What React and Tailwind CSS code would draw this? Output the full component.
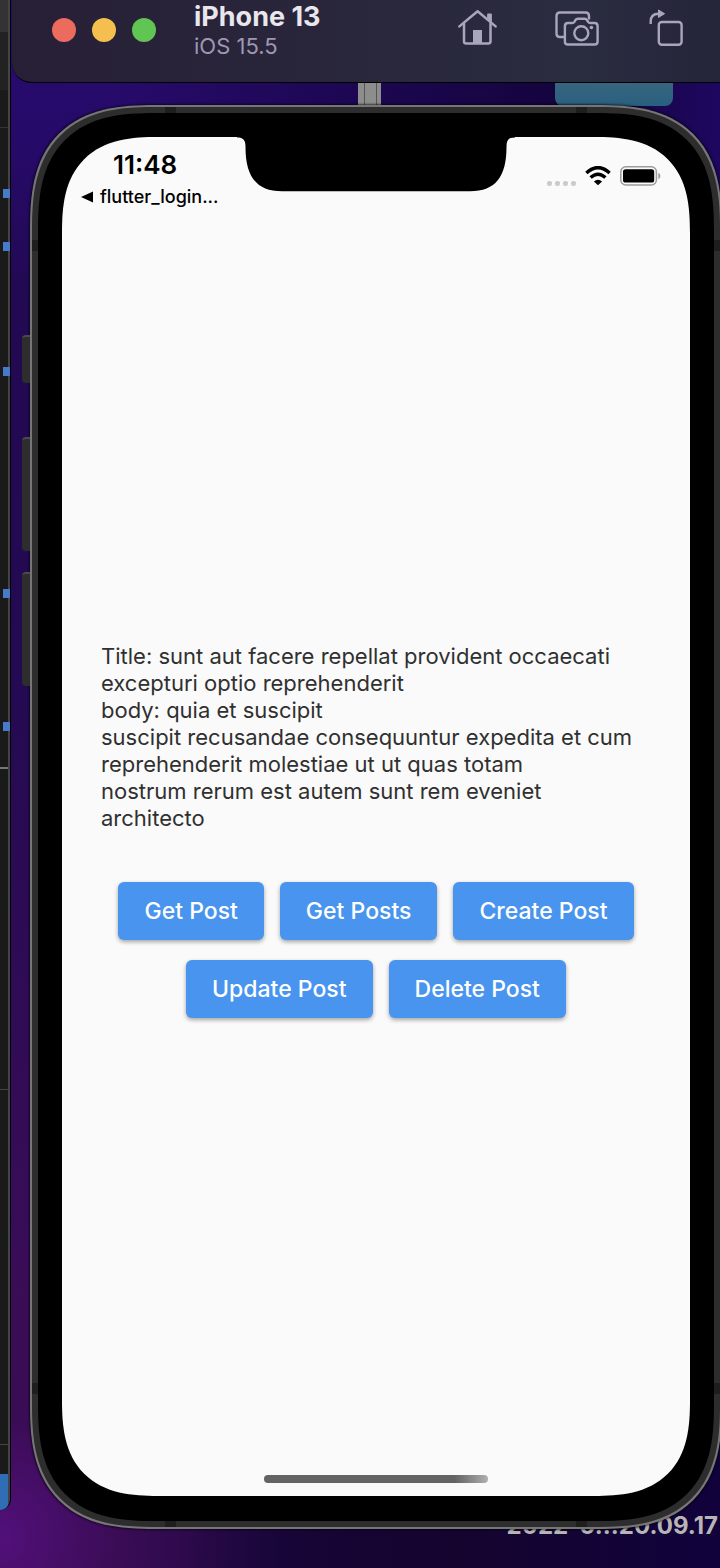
import React from "react";

const MARKERS = ["top-[189px]", "top-[242px]", "top-[367px]", "top-[589px]", "top-[722px]"];

const POST = `Title: sunt aut facere repellat provident occaecati excepturi optio reprehenderit
body: quia et suscipit
suscipit recusandae consequuntur expedita et cum
reprehenderit molestiae ut ut quas totam
nostrum rerum est autem sunt rem eveniet architecto`;

const ACTIONS = ["Get Post", "Get Posts", "Create Post", "Update Post", "Delete Post"];

function HomeIcon() {
  return (
    <svg width="40" height="38" viewBox="0 0 40 38" fill="none" stroke="currentColor" strokeWidth="2.5" strokeLinecap="round" strokeLinejoin="round">
      <path d="M1.4 17.4 L19.6 2.2 L37.6 17.4" />
      <path d="M6 14.5 V32.200 Q6 34.500 8.300 34.500 H30.200 Q32.500 34.500 32.500 32.200 V14.500" />
      <path d="M30 10.500 V5.500 H33 V13" fill="currentColor" strokeWidth="1.800" />
      <rect x="15" y="21" width="9" height="14" fill="currentColor" stroke="none" />
    </svg>
  );
}

function ScreenshotIcon() {
  return (
    <svg width="44" height="36" viewBox="0 0 44 36" fill="none" stroke="currentColor" strokeWidth="2.4" strokeLinecap="butt" strokeLinejoin="round">
      <path d="M9.5 26 H5 Q1.500 26 1.500 22.500 V5 Q1.500 1.500 5 1.500 H30.500 Q34 1.500 34 5 V8.500" />
      <path d="M13 12 H17.200 Q18.600 12 19.400 10.800 L20.500 9 Q21.300 7.800 22.800 7.800 H29.700 Q31.200 7.800 32 9 L33.100 10.800 Q33.900 12 35.300 12 H39.500 Q42.600 12 42.600 15.100 V30.400 Q42.600 33.500 39.500 33.500 H13 Q9.900 33.500 9.900 30.400 V15.100 Q9.900 12 13 12 Z" />
      <circle cx="26.300" cy="22.200" r="7" />
      <circle cx="36.400" cy="16.500" r="1.800" fill="currentColor" stroke="none" />
    </svg>
  );
}

function RotateIcon() {
  return (
    <svg width="34" height="38" viewBox="0 0 34 38" fill="none" stroke="currentColor" strokeWidth="2.400" strokeLinecap="butt" strokeLinejoin="round">
      <path d="M1.700 16 V13.500 Q1.700 5.700 9.500 5.700" />
      <path d="M9.500 2 L15.600 5.700 L9.500 9.400 Z" fill="currentColor" strokeWidth="1" />
      <rect x="9.800" y="14" width="22.800" height="22.800" rx="3" />
    </svg>
  );
}

function WifiIcon() {
  return (
    <svg width="26" height="20" viewBox="0 0 26 20" fill="none" stroke="black" strokeWidth="3.400" aria-label="Wi-Fi">
      <path d="M1.400 7 Q13 -3.800 24.600 7" />
      <path d="M5.600 11.600 Q13 4.800 20.400 11.600" />
      <path d="M13 19.300 L8.900 15.400 Q13 11.900 17.100 15.400 Z" fill="black" stroke="none" />
    </svg>
  );
}

function BatteryIcon() {
  return (
    <svg width="41" height="20" viewBox="0 0 41 20" aria-label="Battery full">
      <rect x="0.800" y="0.800" width="35.600" height="18.200" rx="5" fill="none" stroke="#9c9c9c" strokeWidth="1.500" />
      <rect x="3" y="3.200" width="31.200" height="13.400" rx="2.600" fill="black" />
      <path d="M38.300 6.800 Q40.400 7.800 40.400 10 Q40.400 12.200 38.300 13.200 Z" fill="#9c9c9c" />
    </svg>
  );
}

function Notch() {
  return (
    <svg className="absolute left-1/2 top-0 -translate-x-1/2" width="278" height="55" viewBox="0 0 278 55" aria-hidden="true">
      <path d="M0 -1 H278 V0.500 C271.500 0.500 269.500 3 269.500 10 C269.500 39 259 54.300 233 54.300 H45 C19 54.300 8.500 39 8.500 10 C8.500 3 6.500 0.500 0 0.500 Z" fill="black" />
    </svg>
  );
}

function EditorWindow() {
  return (
    <aside className="absolute left-0 top-0 h-[1510px] w-[11px] overflow-hidden rounded-br-xl border-r border-black bg-[#1a1a1a]">
      <div className="flex h-full flex-col border-r-2 border-[#444444]">
        <div className="h-8 bg-[#333333]" />
        <div className="h-[58px] bg-[#222222]" />
        <div className="h-[38px] border-b border-[#333333]" />
        <div className="h-[641px] border-b-2 border-[#777777]" />
        <div className="h-[321px] border-b border-[#444444]" />
        <div className="h-[355px] border-b border-[#444444]" />
        <div className="h-[29px]" />
        <div className="flex-1 bg-[#2f6db5]" />
      </div>
      {MARKERS.map((top) => (
        <span key={top} className={`absolute right-0 h-[9px] w-[7px] bg-[#467bcb] ${top}`} />
      ))}
    </aside>
  );
}

function TitleBar() {
  return (
    <header className="relative z-10 ml-3 flex h-[83px] items-start justify-between rounded-bl-[20px] border-b border-black bg-linear-to-r from-[#271f35] via-[#2a2c40] via-80% to-[#25253a] pl-10 pr-[37px]">
      <div className="flex">
        <div className="flex gap-4 pt-[18px]">
          <button aria-label="Close" className="size-6 rounded-full bg-[#ed6a5f]" />
          <button aria-label="Minimize" className="size-6 rounded-full bg-[#f5bf4f]" />
          <button aria-label="Zoom" className="size-6 rounded-full bg-[#61c554]" />
        </div>
        <div className="ml-[38px] pt-0.5">
          <h1 className="text-[27px] font-bold leading-[30px] text-[#e9e6ee]">iPhone 13</h1>
          <p className="text-[22px] leading-7 text-[#9f97b3]">iOS 15.5</p>
        </div>
      </div>
      <div className="flex text-[#a9a5bd]">
        <button aria-label="Home" className="mt-[9px]"><HomeIcon /></button>
        <button aria-label="Screenshot" className="ml-[57px] mt-[11px]"><ScreenshotIcon /></button>
        <button aria-label="Rotate" className="ml-[50px] mt-1.5"><RotateIcon /></button>
      </div>
    </header>
  );
}

function StatusBar() {
  return (
    <div className="flex h-[76px] shrink-0 items-start justify-between pl-[18px] pr-[29px] text-black">
      <div>
        <p className="pl-[33px] pt-[13px] text-[26px] font-semibold leading-[30px]">11:48</p>
        <a href="#back" className="mt-[5px] flex items-center gap-1.5 text-[18px] font-medium leading-6">
          <svg width="14" height="12" viewBox="0 0 14 12" aria-hidden="true"><path d="M1 6 L13 0.500 V11.500 Z" fill="black" /></svg>
          flutter_login...
        </a>
      </div>
      <div className="flex items-end gap-[9px] pt-[29px]">
        <div className="flex gap-[3px]">
          {[0, 1, 2, 3].map((n) => <span key={n} className="size-[5px] rounded-[2px] bg-[#cbcbcb]" />)}
        </div>
        <WifiIcon />
        <BatteryIcon />
      </div>
    </div>
  );
}

function Phone() {
  return (
    <div className="relative -mr-0.5 ml-[30px] mt-[22px] flex flex-1 flex-col">
      <span className="absolute -left-2 top-[230px] h-12 w-2 rounded-l-sm border-t-2 border-[#4a4a4a] bg-[#2d2d2d]" />
      <span className="absolute -left-2 top-[332px] h-[114px] w-2 rounded-l-sm border-t-2 border-[#4a4a4a] bg-[#2d2d2d]" />
      <span className="absolute -left-2 top-[467px] h-[114px] w-2 rounded-l-sm border-t-2 border-[#4a4a4a] bg-[#2d2d2d]" />
      <div className="flex flex-1 flex-col rounded-[125px] border-2 border-[#767676] bg-[#2d2d2d] p-1.5 shadow-[0_0_2px_1px_rgba(0,0,0,0.6)] [corner-shape:superellipse(1.4)]">
        <div className="flex flex-1 flex-col rounded-[117px] bg-black p-6 pb-[25px] [corner-shape:superellipse(1.4)]">
          <main className="relative flex flex-1 flex-col overflow-hidden rounded-[96px] bg-[#fafafa] [corner-shape:superellipse(1.4)]">
            <Notch />
            <StatusBar />
            <div className="flex flex-1 flex-col justify-center gap-[50px] px-[39px]">
              <p className="whitespace-pre-line text-[22px] leading-[27px] text-[#303030]">{POST}</p>
              <div className="flex flex-wrap justify-center gap-x-4 gap-y-5">
                {ACTIONS.map((label) => (
                  <button key={label} className="h-[58px] rounded-md bg-[#4894ee] px-[26px] text-[23px] font-medium text-white shadow-[0_2px_4px_rgba(0,0,0,0.35)]">
                    {label}
                  </button>
                ))}
              </div>
            </div>
            <div className="flex h-12 shrink-0 items-end justify-center pb-[13px]">
              <span className="h-2 w-56 rounded-full bg-linear-to-r from-[#636363] from-85% to-[#b0b0b0]" />
            </div>
          </main>
        </div>
      </div>
      <span className="absolute left-[135px] top-0.5 h-1.5 w-[11px] bg-[#1e1e1e]" />
      <span className="absolute right-[135px] top-0.5 h-1.5 w-[11px] bg-[#1e1e1e]" />
      <span className="absolute bottom-0.5 left-[135px] h-1.5 w-[11px] bg-[#1e1e1e]" />
      <span className="absolute bottom-0.5 right-[135px] h-1.5 w-[11px] bg-[#1e1e1e]" />
      <span className="absolute left-0.5 top-[135px] h-[11px] w-1.5 bg-[#1e1e1e]" />
      <span className="absolute right-0.5 top-[135px] h-[11px] w-1.5 bg-[#1e1e1e]" />
      <span className="absolute bottom-[135px] left-0.5 h-[11px] w-1.5 bg-[#1e1e1e]" />
      <span className="absolute bottom-[135px] right-0.5 h-[11px] w-1.5 bg-[#1e1e1e]" />
    </div>
  );
}

export default function App() {
  return (
    <div className="relative flex min-h-screen flex-col overflow-hidden bg-[radial-gradient(circle_at_0%_98%,#52107a_0,#3a0c55_120px,transparent_300px),linear-gradient(to_bottom,#280b70_0,#260a68_150px,#220952_300px,#240a52_700px,#3c0d58_1350px,#3c0d58_1400px,#17063c_1520px)] pb-[39px] font-['Inter',sans-serif]">
      <div className="absolute right-0 top-20 h-40 w-[85%] bg-linear-to-r from-transparent via-[#14043d] via-75% to-[#1e0760]" />
      <div className="absolute bottom-0 right-0 h-64 w-[75%] bg-linear-to-r from-transparent via-[#15042e] to-[#11023c]" />
      <EditorWindow />
      <div className="absolute left-[358px] top-[70px] flex h-10 w-[23px] justify-end gap-[11px] bg-[#8d8d8d] pr-1">
        <span className="w-px bg-[#555555]" />
        <span className="w-px bg-[#555555]" />
      </div>
      <div className="absolute left-[555px] top-[70px] h-9 w-[118px] rounded-b-lg bg-linear-to-b from-[#40687f] to-[#28607f]" />
      <p className="absolute bottom-7 right-0.5 text-[24px] font-bold leading-7 text-[#b8b5b5]">2022-0...20.09.17</p>
      <TitleBar />
      <Phone />
    </div>
  );
}
